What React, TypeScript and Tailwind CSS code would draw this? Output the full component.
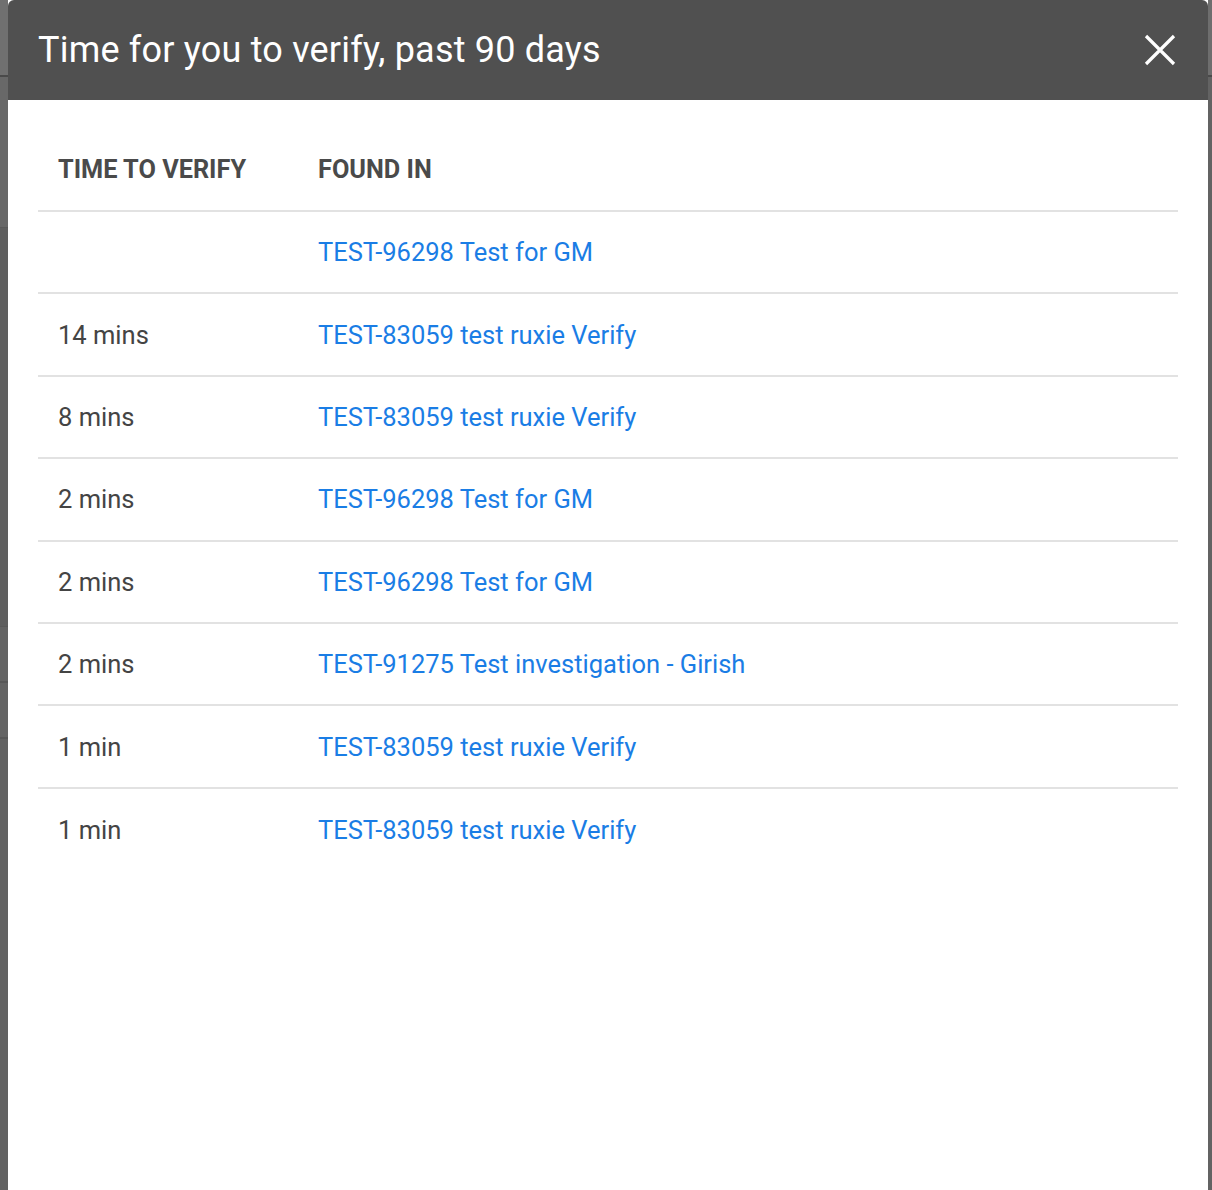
import React from 'react';

const rows = [
  { time: '', link: 'TEST-96298 Test for GM' },
  { time: '14 mins', link: 'TEST-83059 test ruxie Verify' },
  { time: '8 mins', link: 'TEST-83059 test ruxie Verify' },
  { time: '2 mins', link: 'TEST-96298 Test for GM' },
  { time: '2 mins', link: 'TEST-96298 Test for GM' },
  { time: '2 mins', link: 'TEST-91275 Test investigation - Girish' },
  { time: '1 min', link: 'TEST-83059 test ruxie Verify' },
  { time: '1 min', link: 'TEST-83059 test ruxie Verify' },
];

const App = () => {
  return (
    <div className="flex h-[1190px] w-[1212px] overflow-hidden bg-[#676767] font-['Roboto',sans-serif]">
      {/* dimmed page behind the dialog */}
      <div className="flex w-[8px] shrink-0 flex-col">
        <div className="h-[77px] border-b-2 border-[#4a4a4a] bg-[#707070]" />
        <div className="h-[150px] bg-[#686868]" />
        <div className="h-[400px] border-y border-[#5a5a5a] bg-[#5f5f5f]" />
        <div className="h-[56px] border-b-2 border-[#585858] bg-[#646464]" />
        <div className="h-[56px] border-b-2 border-[#585858] bg-[#646464]" />
        <div className="flex-1 bg-[#626262]" />
      </div>

      <div className="flex w-[1200px] shrink-0 flex-col bg-white">
        <div className="flex h-[100px] items-center justify-between rounded-t-[6px] bg-[#505050] pl-[30px] pr-[30px]">
          <h1 className="text-[36px] font-normal leading-none tracking-[0.2px] text-white">
            Time for you to verify, past 90 days
          </h1>
          <button className="flex h-[36px] w-[36px] items-center justify-center" aria-label="Close">
            <svg width="32" height="32" viewBox="0 0 32 32">
              <path d="M2 2 L30 30 M30 2 L2 30" stroke="white" strokeWidth="3.2" />
            </svg>
          </button>
        </div>

        <div className="flex-1 px-[30px]">
          <div className="flex border-b-2 border-[#e2e2e2] pb-[26px] pt-[56px] text-[25.3px] font-bold leading-[28px] text-[#4a4a4a]">
            <div className="w-[260px] pl-[20px]">TIME TO VERIFY</div>
            <div className="pl-[20px]">FOUND IN</div>
          </div>
          {rows.map((row, i) => (
            <div
              key={i}
              className={
                'flex h-[82.4px] items-center text-[25.5px] leading-[28px] ' +
                (i < rows.length - 1 ? 'border-b-2 border-[#e2e2e2]' : '')
              }
            >
              <div className="w-[260px] pl-[20px] text-[#444444]">{row.time}</div>
              <a href="#" className="pl-[20px] text-[#1a7de5]">
                {row.link}
              </a>
            </div>
          ))}
        </div>
      </div>

      <div className="flex w-[4px] shrink-0 flex-col">
        <div className="h-[77px] border-b-2 border-[#4a4a4a] bg-[#6e6e6e]" />
        <div className="flex-1 bg-[#636363]" />
      </div>
    </div>
  );
};

export default App;
